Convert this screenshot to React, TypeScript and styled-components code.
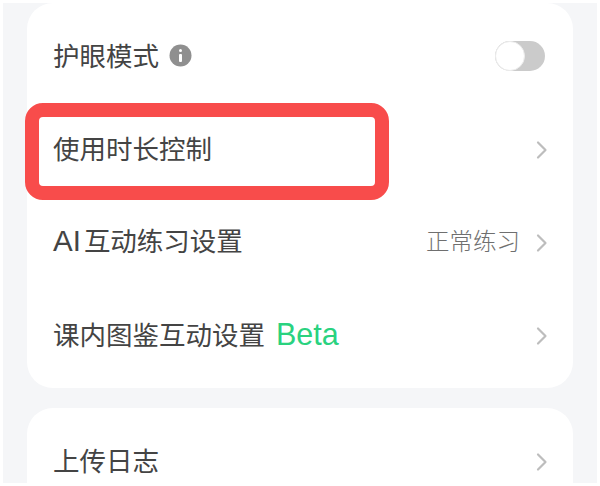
import * as React from 'react';
import styled, {createGlobalStyle} from "styled-components";

const GlobalStyle = createGlobalStyle`
  html, body {
    margin: 0;
    padding: 0;
    background: #fff;
    overflow: hidden;
  }
`;

const Page = styled.div`
  width: 594px;
  height: 480px;
  margin: 3px;
  padding: 0 24px;
  box-sizing: border-box;
  background: #f5f6f8;
  overflow: hidden;
  font-family: "Noto Sans CJK SC", "Noto Sans", sans-serif;
`;

const Frame = styled.div`
  position: relative;
  display: flex;
  flex-direction: column;
  gap: 20px;
`;

const Card = styled.div`
  background: #fff;
  border-radius: 26px;
  padding: 6.5px 0;
  flex-shrink: 0;
`;

const Row = styled.div`
  height: 93px;
  padding: 0 26px 2px;
  box-sizing: border-box;
  display: flex;
  align-items: center;
  justify-content: space-between;
`;

const Left = styled.div`
  display: flex;
  align-items: center;
  gap: 10px;
`;

const Right = styled.div`
  display: flex;
  align-items: center;
  gap: 16px;
`;

const Title = styled.span`
  font-size: 26.5px;
  color: #444;
  line-height: 1;
`;

const Latin = styled.span`
  font-family: "Liberation Sans", sans-serif;
  font-size: 29.5px;
  margin-right: 3px;
`;

const Beta = styled.span`
  font-family: "Liberation Sans", sans-serif;
  font-size: 30.5px;
  color: #2ad27f;
  line-height: 1;
  margin-left: 1px;
`;

const Value = styled.span`
  font-size: 23.5px;
  font-weight: 300;
  color: #6f6f6f;
  line-height: 1;
`;

const Toggle = styled.div`
  width: 50px;
  height: 30px;
  margin: 2px 2px 0 0;
  border-radius: 15px;
  background: #cbcbcb;
  position: relative;
`;

const Knob = styled.div`
  position: absolute;
  left: 0;
  top: 0;
  width: 30px;
  height: 30px;
  box-sizing: border-box;
  border-radius: 50%;
  background: #fff;
  border: 1px solid #ececec;
`;

const Highlight = styled.div`
  position: absolute;
  left: -2px;
  top: 100px;
  width: 364px;
  height: 97px;
  box-sizing: border-box;
  border: 14px solid #f84c4b;
  border-radius: 18px;
  pointer-events: none;
`;

const ChevronIcon = styled.svg`
  margin: 3px -1px 0 0;
`;

const Info = () => (
    <svg width="23" height="23" viewBox="0 0 23 23">
        <circle cx="11.5" cy="11.5" r="11" fill="#8f8f8f"/>
        <rect x="10" y="5" width="3" height="3" rx="1.5" fill="#fff"/>
        <rect x="10" y="10" width="3" height="8" rx="1" fill="#fff"/>
    </svg>
);

const Chevron = () => (
    <ChevronIcon width="12" height="20" viewBox="0 0 12 20" fill="none">
        <path d="M2 2.5 L9.5 10 L2 17.5" stroke="#bdbdbd" strokeWidth="2.2" strokeLinecap="round" strokeLinejoin="round"/>
    </ChevronIcon>
);

export default function App() {
    return (
        <>
            <GlobalStyle/>
            <Page>
                <Frame>
                    <Card>
                        <Row>
                            <Left>
                                <Title>护眼模式</Title>
                                <Info/>
                            </Left>
                            <Toggle><Knob/></Toggle>
                        </Row>
                        <Row>
                            <Title>使用时长控制</Title>
                            <Chevron/>
                        </Row>
                        <Row>
                            <Title><Latin>AI</Latin>互动练习设置</Title>
                            <Right>
                                <Value>正常练习</Value>
                                <Chevron/>
                            </Right>
                        </Row>
                        <Row>
                            <Left>
                                <Title>课内图鉴互动设置</Title>
                                <Beta>Beta</Beta>
                            </Left>
                            <Chevron/>
                        </Row>
                    </Card>
                    <Card>
                        <Row>
                            <Title>上传日志</Title>
                            <Chevron/>
                        </Row>
                    </Card>
                    <Highlight/>
                </Frame>
            </Page>
        </>
    );
}
